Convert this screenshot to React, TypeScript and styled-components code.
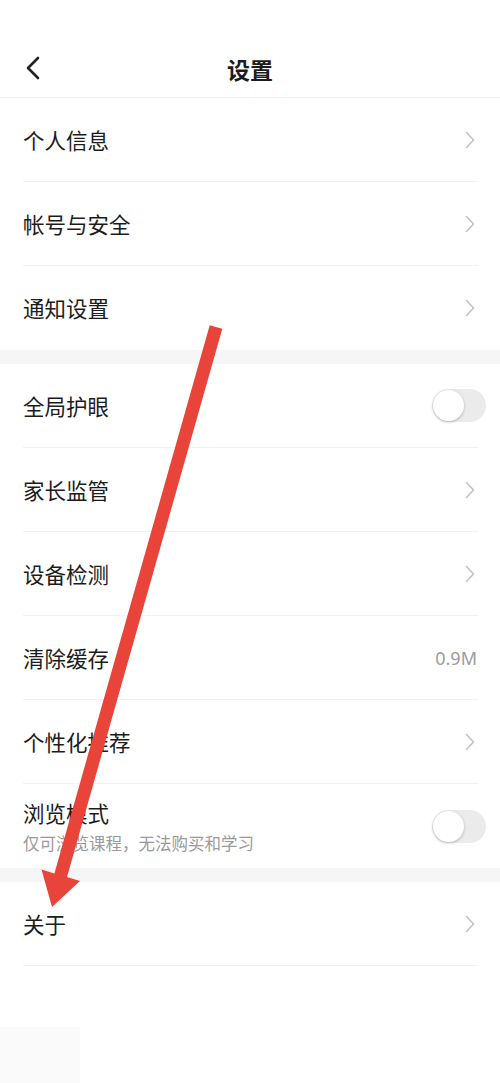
import React, { FC } from "react";
import styled, { createGlobalStyle } from "styled-components";

const GlobalStyle = createGlobalStyle`
  * { box-sizing: border-box; }
  body {
    margin: 0;
    background: #ffffff;
    font-family: "Noto Sans CJK SC", "Noto Sans", sans-serif;
    color: #1c1c1c;
  }
`;

type ItemType = {
  title: string;
  sub?: string;
  value?: string;
  kind: "arrow" | "toggle" | "value";
};

const groups: Array<Array<ItemType>> = [
  [
    { title: "个人信息", kind: "arrow" },
    { title: "帐号与安全", kind: "arrow" },
    { title: "通知设置", kind: "arrow" },
  ],
  [
    { title: "全局护眼", kind: "toggle" },
    { title: "家长监管", kind: "arrow" },
    { title: "设备检测", kind: "arrow" },
    { title: "清除缓存", kind: "value", value: "0.9M" },
    { title: "个性化推荐", kind: "arrow" },
    { title: "浏览模式", sub: "仅可浏览课程，无法购买和学习", kind: "toggle" },
  ],
  [{ title: "关于", kind: "arrow" }],
];

const Chevron: FC<{ color: string; w: number; h: number; sw: number; left?: boolean }> = ({ color, w, h, sw, left }) => (
  <svg width={w} height={h} viewBox={`0 0 ${w} ${h}`} fill="none">
    {left ? (
      <polyline points={`${w - 2},2 2,${h / 2} ${w - 2},${h - 2}`} stroke={color} strokeWidth={sw} strokeLinecap="round" strokeLinejoin="round" />
    ) : (
      <polyline points={`1.5,1.5 ${w - 1.5},${h / 2} 1.5,${h - 1.5}`} stroke={color} strokeWidth={sw} strokeLinecap="round" strokeLinejoin="round" />
    )}
  </svg>
);

const Row: FC<{ item: ItemType; last: boolean }> = ({ item, last }) => (
  <RowStyled $last={last}>
    <TextBox>
      <Title>{item.title}</Title>
      {item.sub && <Sub>{item.sub}</Sub>}
    </TextBox>
    {item.kind === "arrow" && (
      <ArrowBox>
        <Chevron color="#c2c2c2" w={10} h={18} sw={1.6} />
      </ArrowBox>
    )}
    {item.kind === "value" && <Value>{item.value}</Value>}
    {item.kind === "toggle" && (
      <Track>
        <Knob />
      </Track>
    )}
  </RowStyled>
);

const App: FC = () => (
  <>
    <GlobalStyle />
    <Page>
      <Header>
        <Back>
          <Chevron color="#222" w={14} h={24} sw={2.6} left />
        </Back>
        <HeaderTitle>设置</HeaderTitle>
      </Header>
      {groups.map((g, gi) => (
        <Group key={gi} $first={gi === 0}>
          {g.map((item, i) => (
            <Row key={item.title} item={item} last={gi !== groups.length - 1 && i === g.length - 1} />
          ))}
        </Group>
      ))}
      <Corner />
      <Overlay width="500" height="1083" viewBox="0 0 500 1083">
        <polygon
          points="209.7,325.2 222.3,328.8 67,877 80,881 52,907 41.5,869.5 54.4,873.4"
          fill="#e9443a"
        />
      </Overlay>
    </Page>
  </>
);

const Page = styled.div`
  position: relative;
  width: 500px;
  height: 1083px;
  overflow: hidden;
  background: #ffffff;
`;

const Header = styled.div`
  height: 98px;
  display: flex;
  align-items: center;
  justify-content: center;
  padding-top: 42px;
  position: relative;
  border-bottom: 1px solid #f3f3f3;
`;

const Back = styled.div`
  position: absolute;
  left: 26px;
  top: 56px;
  display: flex;
`;

const HeaderTitle = styled.div`
  font-size: 23px;
  font-weight: 700;
  color: #1c1c1c;
  line-height: 1;
`;

const Group = styled.div<{ $first: boolean }>`
  border-top: ${(p) => (p.$first ? "none" : "14px solid #f6f6f6")};
`;

const RowStyled = styled.div<{ $last: boolean }>`
  height: 84px;
  margin: 0 22px 0 23px;
  display: flex;
  align-items: center;
  justify-content: space-between;
  border-bottom: ${(p) => (p.$last ? "none" : "1px solid #f2f2f2")};
`;

const TextBox = styled.div`
  display: flex;
  flex-direction: column;
  gap: 6px;
`;

const Title = styled.div`
  font-size: 21.5px;
  line-height: 28px;
  color: #1c1c1c;
`;

const Sub = styled.div`
  font-size: 16.5px;
  line-height: 20px;
  color: #9a9a9a;
`;

const ArrowBox = styled.div`
  display: flex;
  margin-right: 3px;
`;

const Value = styled.div`
  font-size: 18px;
  color: #9c9c9c;
  font-family: "Noto Sans", sans-serif;
  margin-right: 1px;
`;

const Track = styled.div`
  width: 54px;
  height: 33px;
  border-radius: 17px;
  background: #ebebeb;
  position: relative;
  margin-right: -8px;
`;

const Knob = styled.div`
  position: absolute;
  left: 1px;
  top: 1px;
  width: 31px;
  height: 31px;
  border-radius: 50%;
  background: #ffffff;
  box-shadow: 0 1px 3px rgba(0, 0, 0, 0.25);
`;

const Corner = styled.div`
  position: absolute;
  left: 0;
  bottom: 0;
  width: 80px;
  height: 56px;
  background: #fafafa;
`;

const Overlay = styled.svg`
  position: absolute;
  left: 0;
  top: 0;
  pointer-events: none;
`;

export default App;
